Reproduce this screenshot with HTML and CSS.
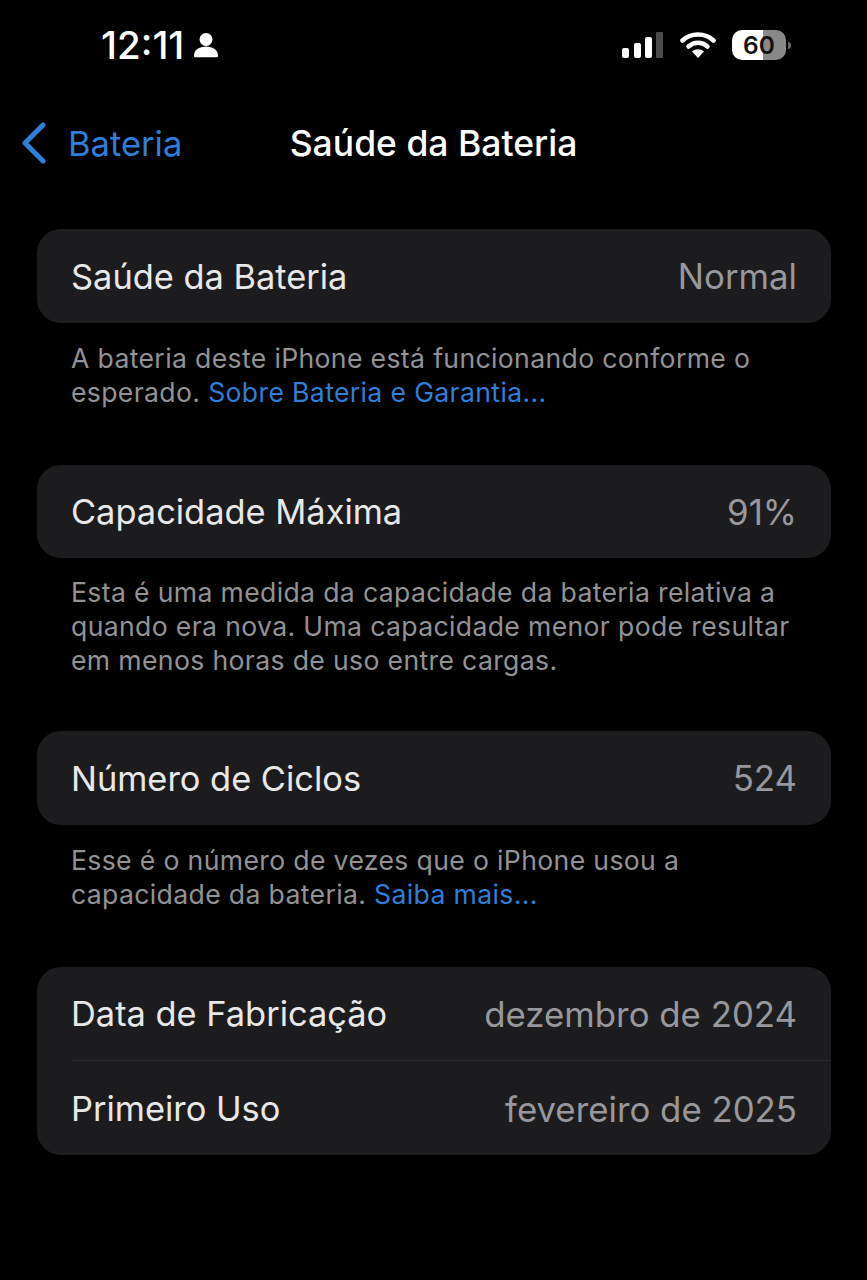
FILE: index.html
```html
<!DOCTYPE html>
<html lang="pt-BR">

<head>
    <meta charset="UTF-8">
    <title>Saúde da Bateria</title>
    <link rel="stylesheet" href="styles.css">
</head>

<body>
    <div class="status">
        <div class="hora">
            <span>12:11</span>
            <svg class="pessoa" width="26" height="28" viewBox="0 0 26 28">
                <circle cx="13" cy="8.500" r="6.500" fill="#fff" />
                <path d="M1 25c0-6 5-9.500 12-9.500s12 3.500 12 9.500c0 .8-.6 1.300-1.400 1.300H2.400C1.600 26.300 1 25.800 1 25z" fill="#fff" />
            </svg>
        </div>
        <div class="icones">
            <svg width="42" height="26" viewBox="0 0 42 26">
                <rect x="0" y="16" width="7" height="10" rx="2" fill="#fff" />
                <rect x="12" y="11" width="7" height="15" rx="2" fill="#fff" />
                <rect x="23" y="5" width="7" height="21" rx="2" fill="#fff" />
                <rect x="34" y="0" width="7" height="26" rx="1" fill="#4a4a4a" />
            </svg>
            <svg width="36" height="28" viewBox="0 0 36 28">
                <path d="M2.500 9.500C11 1.500 25 1.500 33.500 9.500" fill="none" stroke="#fff" stroke-width="4.500" stroke-linecap="round" />
                <path d="M8.500 15.500c5.500-5 13.500-5 19 0" fill="none" stroke="#fff" stroke-width="4.500" stroke-linecap="round" />
                <path d="M12 20.500c3.500-3 8.500-3 12 0L18 27z" fill="#fff" />
            </svg>
            <div class="pilha">
                <div class="pilha-corpo"><span>60</span></div>
                <div class="pilha-ponta"></div>
            </div>
        </div>
    </div>

    <nav>
        <a class="voltar">
            <svg width="28" height="42" viewBox="0 0 28 42">
                <path d="M23 3 5 21l18 18" fill="none" stroke="#2f7ed8" stroke-width="5" stroke-linecap="round" stroke-linejoin="round" />
            </svg>
            <span>Bateria</span>
        </a>
        <h1>Saúde da Bateria</h1>
    </nav>

    <main>
        <section class="grupo">
            <div class="linha"><span>Saúde da Bateria</span><span class="valor">Normal</span></div>
        </section>
        <p class="nota">A bateria deste iPhone está funcionando conforme o esperado. <a>Sobre Bateria e Garantia...</a></p>

        <section class="grupo">
            <div class="linha"><span>Capacidade Máxima</span><span class="valor">91%</span></div>
        </section>
        <p class="nota nota-longa">Esta é uma medida da capacidade da bateria relativa a quando era nova. Uma capacidade menor pode resultar em menos horas de uso entre cargas.</p>

        <section class="grupo">
            <div class="linha"><span>Número de Ciclos</span><span class="valor">524</span></div>
        </section>
        <p class="nota">Esse é o número de vezes que o iPhone usou a capacidade da bateria. <a>Saiba mais...</a></p>

        <section class="grupo">
            <div class="linha"><span>Data de Fabricação</span><span class="valor">dezembro de 2024</span></div>
            <div class="linha"><span>Primeiro Uso</span><span class="valor">fevereiro de 2025</span></div>
        </section>
    </main>
</body></html>
```

FILE: styles.css
```css
* {
    margin: 0;
    padding: 0;
    box-sizing: border-box;
}

body {
    height: 1280px;
    background: #000;
    color: #e8e8e8;
    font-family: Inter, "Liberation Sans", sans-serif;
    overflow: hidden;
}

/* barra de status */
.status {
    display: flex;
    justify-content: space-between;
    align-items: center;
    height: 90px;
    padding: 0 76px 0 101px;
}

.hora {
    display: flex;
    align-items: center;
    gap: 9px;
    color: #fff;
    font-size: 38.500px;
    font-weight: 500;
}

.icones {
    display: flex;
    align-items: center;
    gap: 16px;
}

.pilha {
    display: flex;
    align-items: center;
    gap: 2px;
}

.pilha-corpo {
    display: flex;
    justify-content: center;
    align-items: center;
    width: 54px;
    height: 30px;
    border-radius: 10px;
    background: linear-gradient(90deg, #fff 58%, #888 58%);
    color: #111;
    font-size: 24.500px;
    font-weight: 600;
}

.pilha-ponta {
    width: 3px;
    height: 7px;
    border-radius: 0 3px 3px 0;
    background: #666;
}

/* navegacao */
nav {
    position: relative;
    display: flex;
    justify-content: center;
    align-items: center;
    height: 107px;
}

.voltar {
    position: absolute;
    top: 32px;
    left: 20px;
    display: flex;
    align-items: center;
    gap: 20px;
    color: #2f7ed8;
    font-size: 34.500px;
}

h1 {
    color: #fff;
    font-size: 35.500px;
    font-weight: 500;
}

main {
    padding: 32px 36px 0 37px;
}

.grupo {
    background: #1c1c1e;
    border-radius: 24px;
    overflow: hidden;
}

.linha {
    display: flex;
    justify-content: space-between;
    align-items: center;
    height: 93.500px;
    margin-left: 34px;
    padding-top: 1px;
    padding-right: 34px;
    font-size: 34.400px;
}

.linha + .linha {
    height: 95px;
    border-top: 1px solid #2a2a2c;
}

.valor {
    color: #98989c;
    font-size: 34.800px;
}

.nota {
    height: 142px;
    padding: 18px 34px 0;
    color: #929296;
    font-size: 26.600px;
    line-height: 34.500px;
    letter-spacing: 0.35px;
}

.nota a {
    color: #2f7ed8;
}

.nota-longa {
    height: 173px;
    padding-top: 17px;
    line-height: 34px;
}
```
